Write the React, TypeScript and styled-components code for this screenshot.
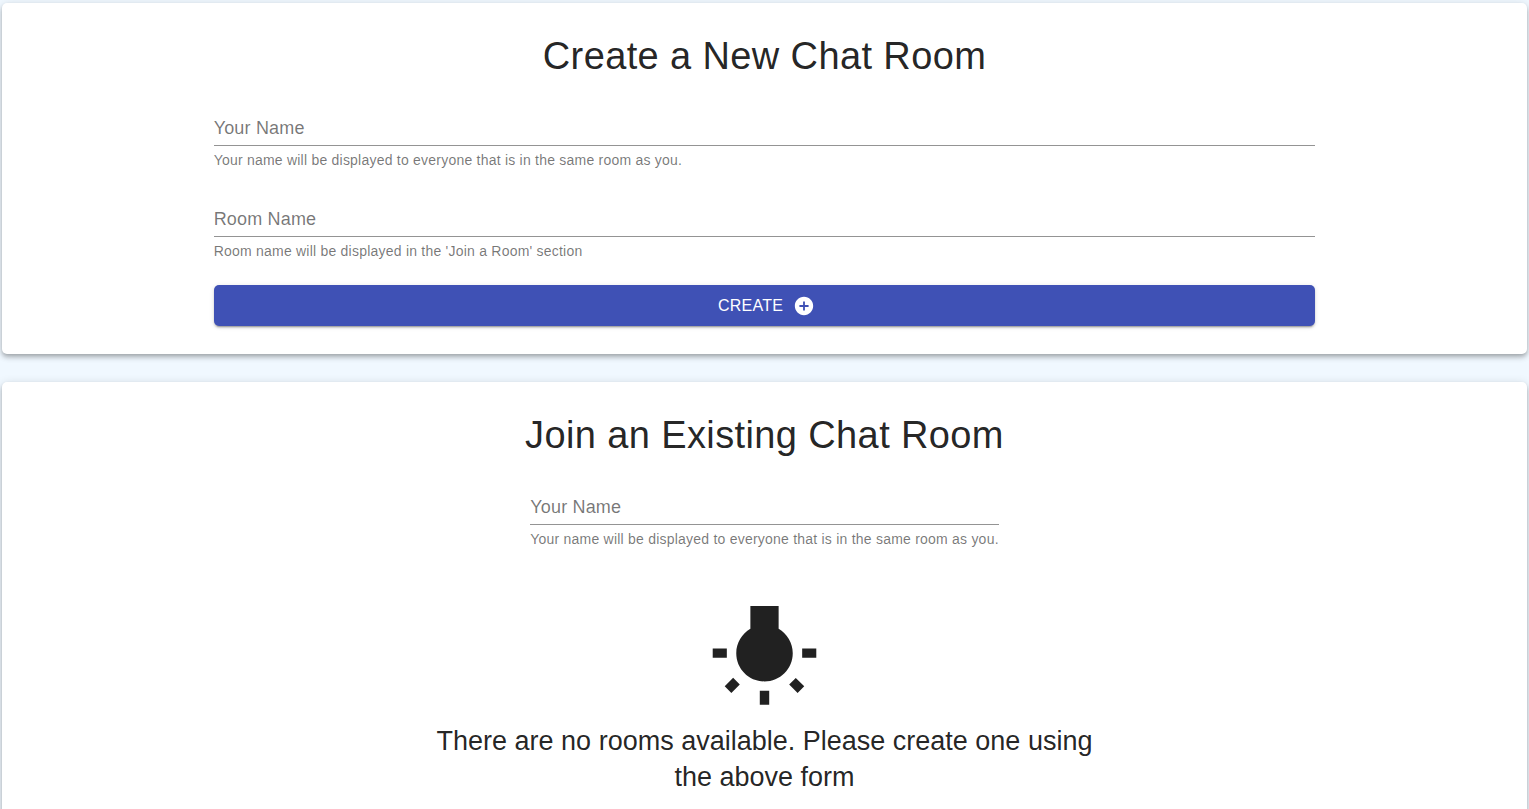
import React, { useId } from "react";
import styled, { createGlobalStyle } from "styled-components";

const GlobalStyle = createGlobalStyle`
  *, *::before, *::after { box-sizing: border-box; }
  body {
    margin: 0;
    background: #f0f8ff;
    color: rgba(0, 0, 0, 0.87);
    font-family: "Liberation Sans", Arial, sans-serif;
  }
`;

const Page = styled.main`
  display: flex;
  flex-direction: column;
  gap: 28px;
  padding: 3px 2px;
`;

const Card = styled.section`
  display: flex;
  flex-direction: column;
  align-items: center;
  padding: 28px;
  border-radius: 5px;
  background: #fff;
  box-shadow:
    0 2px 4px -1px rgba(0, 0, 0, 0.2),
    0 4px 5px 0 rgba(0, 0, 0, 0.14),
    0 1px 10px 0 rgba(0, 0, 0, 0.12);
`;

const Title = styled.h1`
  margin: 0 0 29px;
  font-size: 38px;
  font-weight: 400;
  line-height: 50px;
  letter-spacing: 0.01em;
  text-align: center;
`;

const Form = styled.form`
  display: flex;
  flex-direction: column;
  width: 75%;
`;

const FieldRoot = styled.div<{ $gapAfter: number }>`
  display: grid;
  margin-bottom: ${(p) => p.$gapAfter}px;
`;

const Input = styled.input`
  grid-area: 1 / 1;
  width: 100%;
  height: 36px;
  padding: 7px 0 8px;
  border: 0;
  border-bottom: 1px solid rgba(0, 0, 0, 0.42);
  outline: 0;
  background: transparent;
  color: inherit;
  font: inherit;
  font-size: 18px;

  &:focus {
    border-bottom-color: #3f51b5;
  }
`;

const Label = styled.label`
  grid-area: 1 / 1;
  justify-self: start;
  padding-top: 7px;
  color: rgba(0, 0, 0, 0.54);
  font-size: 18px;
  line-height: 22px;
  letter-spacing: 0.01em;
  pointer-events: none;

  ${Input}:focus + &,
  ${Input}:not(:placeholder-shown) + & {
    margin-top: -20px;
    font-size: 14px;
  }
`;

const Helper = styled.p`
  margin: 3px 0 0;
  color: rgba(0, 0, 0, 0.54);
  font-size: 14px;
  line-height: 22px;
  letter-spacing: 0.016em;
`;

const CreateButton = styled.button`
  display: flex;
  align-items: center;
  justify-content: center;
  gap: 10px;
  height: 41px;
  padding: 0 20px 0 24px;
  border: 0;
  border-radius: 5px;
  background: #3f51b5;
  color: #fff;
  font-family: inherit;
  font-size: 16px;
  letter-spacing: 0.016em;
  text-transform: uppercase;
  cursor: pointer;
  box-shadow:
    0 3px 1px -2px rgba(0, 0, 0, 0.2),
    0 2px 2px 0 rgba(0, 0, 0, 0.14),
    0 1px 5px 0 rgba(0, 0, 0, 0.12);
`;

const Icon = styled.svg<{ $size: number }>`
  flex: none;
  width: ${(p) => p.$size}px;
  height: ${(p) => p.$size}px;
  fill: currentColor;
`;

const EmptyState = styled.div`
  display: flex;
  flex-direction: column;
  align-items: center;
  gap: 11px;
  width: 46%;
`;

const EmptyText = styled.p`
  margin: 0;
  font-size: 27px;
  line-height: 36px;
  text-align: center;
`;

interface FieldProps {
  label: string;
  helper: string;
  gapAfter: number;
}

function Field({ label, helper, gapAfter }: FieldProps) {
  const id = useId();
  return (
    <FieldRoot $gapAfter={gapAfter}>
      <Input id={id} type="text" placeholder=" " aria-describedby={`${id}-helper`} />
      <Label htmlFor={id}>{label}</Label>
      <Helper id={`${id}-helper`}>{helper}</Helper>
    </FieldRoot>
  );
}

const NAME_HELPER = "Your name will be displayed to everyone that is in the same room as you.";

export default function App() {
  return (
    <>
      <GlobalStyle />
      <Page>
        <Card>
          <Title>Create a New Chat Room</Title>
          <Form onSubmit={(e) => e.preventDefault()}>
            <Field label="Your Name" helper={NAME_HELPER} gapAfter={30} />
            <Field
              label="Room Name"
              helper="Room name will be displayed in the 'Join a Room' section"
              gapAfter={23}
            />
            <CreateButton type="submit">
              Create
              <Icon $size={22} viewBox="0 0 24 24" aria-hidden="true">
                <path d="M12 2C6.48 2 2 6.48 2 12s4.48 10 10 10 10-4.48 10-10S17.52 2 12 2zm5 11h-4v4h-2v-4H7v-2h4V7h2v4h4v2z" />
              </Icon>
            </CreateButton>
          </Form>
        </Card>
        <Card>
          <Title>Join an Existing Chat Room</Title>
          <Field label="Your Name" helper={NAME_HELPER} gapAfter={49} />
          <EmptyState>
            <Icon $size={113} viewBox="0 0 24 24" aria-hidden="true">
              <path d="M3.55 18.54l1.41 1.41 1.79-1.8-1.41-1.41-1.79 1.8zM11 22.45h2V19.5h-2v2.95zM4 10.5H1v2h3v-2zm11-4.19V1.5H9v4.81C7.21 7.35 6 9.28 6 11.5c0 3.31 2.69 6 6 6s6-2.69 6-6c0-2.22-1.21-4.15-3-5.19zm5 4.19v2h3v-2h-3zm-2.76 7.66l1.79 1.8 1.41-1.41-1.8-1.79-1.4 1.4z" />
            </Icon>
            <EmptyText>
              There are no rooms available. Please create one using the above form
            </EmptyText>
          </EmptyState>
        </Card>
      </Page>
    </>
  );
}
